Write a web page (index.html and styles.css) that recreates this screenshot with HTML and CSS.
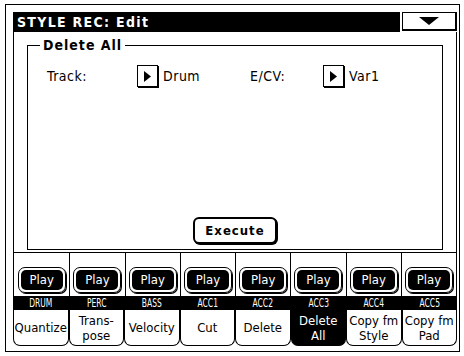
FILE: index.html
```html
<!DOCTYPE html>
<html lang="en">
  <head>
    <meta charset="UTF-8" />
    <title>STYLE REC: Edit</title>
    <link rel="stylesheet" href="styles.css">
  </head>
  <body>
    <div class="screen">
      <div class="titlebar">
        <div class="title">STYLE REC: Edit</div>
        <div class="menu-btn">
          <svg width="20" height="8" viewBox="0 0 20 8"><polygon points="0,0 20,0 10,8" fill="#000"/></svg>
        </div>
      </div>

      <div class="page">
        <fieldset class="group">
          <legend>Delete All</legend>
          <div class="params">
            <div class="param track">
              <span class="label">Track:</span>
              <span class="arrow"><svg width="7" height="11" viewBox="0 0 7 11"><polygon points="0,0 7,5.5 0,11" fill="#000"/></svg></span>
              <span class="value">Drum</span>
            </div>
            <div class="param ecv">
              <span class="label">E/CV:</span>
              <span class="arrow"><svg width="7" height="11" viewBox="0 0 7 11"><polygon points="0,0 7,5.5 0,11" fill="#000"/></svg></span>
              <span class="value">Var1</span>
            </div>
          </div>
          <div class="exec-row">
            <button class="exec">Execute</button>
          </div>
        </fieldset>
      </div>

      <div class="tracks">
        <div class="play-row">
          <div class="cell"><div class="play"><div class="play-in">Play</div></div></div>
          <div class="cell"><div class="play"><div class="play-in">Play</div></div></div>
          <div class="cell"><div class="play"><div class="play-in">Play</div></div></div>
          <div class="cell"><div class="play"><div class="play-in">Play</div></div></div>
          <div class="cell"><div class="play"><div class="play-in">Play</div></div></div>
          <div class="cell"><div class="play"><div class="play-in">Play</div></div></div>
          <div class="cell"><div class="play"><div class="play-in">Play</div></div></div>
          <div class="cell"><div class="play"><div class="play-in">Play</div></div></div>
        </div>
        <div class="names">
          <span>DRUM</span><span>PERC</span><span>BASS</span><span>ACC1</span>
          <span>ACC2</span><span>ACC3</span><span>ACC4</span><span>ACC5</span>
        </div>
        <div class="tabs">
          <div class="tab">Quantize</div>
          <div class="tab">Trans-<br>pose</div>
          <div class="tab">Velocity</div>
          <div class="tab">Cut</div>
          <div class="tab">Delete</div>
          <div class="tab active">Delete<br>All</div>
          <div class="tab">Copy fm<br>Style</div>
          <div class="tab">Copy fm<br>Pad</div>
        </div>
      </div>
    </div>
  </body>
</html>
```

FILE: styles.css
```css
* {
  box-sizing: border-box;
}

body {
  margin: 0;
  background: #fff;
  color: #000;
  font-family: "DejaVu Sans Condensed", "Liberation Sans Narrow", "DejaVu Sans", sans-serif;
}

.screen {
  margin: 4px 0 0 5px;
  width: 455px;
  height: 348px;
  border: 1px solid #000;
  padding: 7px 2px 0 7px;
}

.titlebar {
  display: flex;
  gap: 2px;
  height: 20px;
}

.title {
  flex: 1;
  background: #000;
  color: #fff;
  font-weight: bold;
  font-size: 14px;
  line-height: 20px;
  letter-spacing: 1.3px;
  padding-left: 4px;
}

.menu-btn {
  width: 55px;
  height: 19px;
  border: 1px solid #000;
  border-right-width: 2px;
  border-bottom-width: 2px;
  display: flex;
  justify-content: center;
  align-items: center;
}

.page {
  height: 220px;
  border-left: 1px solid #000;
  border-right: 1px solid #000;
  padding: 7px 13px 0 13px;
}

.group {
  margin: 0;
  height: 211px;
  border: 1px solid #000;
  padding: 0;
}

.group legend {
  margin-left: 12px;
  padding: 0 3px;
  font-weight: bold;
  font-size: 14px;
  line-height: 13px;
  letter-spacing: 1px;
}

.params {
  display: flex;
  margin-top: 13px;
  padding-left: 19px;
  font-size: 14px;
  letter-spacing: 0.5px;
}

.param {
  display: flex;
  align-items: center;
}

.track {
  width: 203px;
}

.track .label {
  width: 90px;
}

.ecv .label {
  width: 73px;
}

.arrow {
  width: 21px;
  height: 22px;
  border: 1px solid #000;
  box-shadow: 1px 1px 0 #000;
  display: flex;
  justify-content: center;
  align-items: center;
}

.value {
  margin-left: 5px;
}

.exec-row {
  display: flex;
  justify-content: center;
  margin-top: 130px;
}

.exec {
  width: 84px;
  height: 27px;
  background: #fff;
  border: 2px solid #000;
  border-radius: 6px;
  box-shadow: 1px 1px 0 #000;
  font-family: inherit;
  font-weight: bold;
  font-size: 13px;
  letter-spacing: 1px;
  color: #000;
  padding: 0;
}

.tracks {
  border-top: 1px solid #000;
}

.play-row {
  display: grid;
  grid-template-columns: repeat(8, 1fr);
  height: 43px;
  border-left: 1px solid #000;
  border-right: 1px solid #000;
}

.cell {
  display: flex;
  justify-content: center;
  padding-top: 14px;
}

.cell + .cell {
  border-left: 1px solid #000;
}

.play {
  width: 48px;
  height: 26px;
  border: 1px solid #000;
  border-radius: 7px;
  box-shadow: 1px 1px 0 #000;
  padding: 2px;
}

.play-in {
  height: 100%;
  background: #000;
  color: #fff;
  border-radius: 5px;
  font-size: 13px;
  line-height: 20px;
  text-align: center;
}

.names {
  display: grid;
  grid-template-columns: repeat(8, 1fr);
  background: #000;
  color: #fff;
  height: 14px;
  font-size: 12px;
  line-height: 14px;
  text-align: center;
}

.names span {
  transform: scaleX(0.7);
}

.tabs {
  display: grid;
  grid-template-columns: repeat(8, 1fr);
  height: 36px;
}

.tab {
  border: 1px solid #000;
  border-top: none;
  border-radius: 0 0 7px 7px;
  display: flex;
  justify-content: center;
  align-items: center;
  text-align: center;
  font-size: 13px;
  line-height: 15px;
}

.tab.active {
  background: #000;
  color: #fff;
}
```
